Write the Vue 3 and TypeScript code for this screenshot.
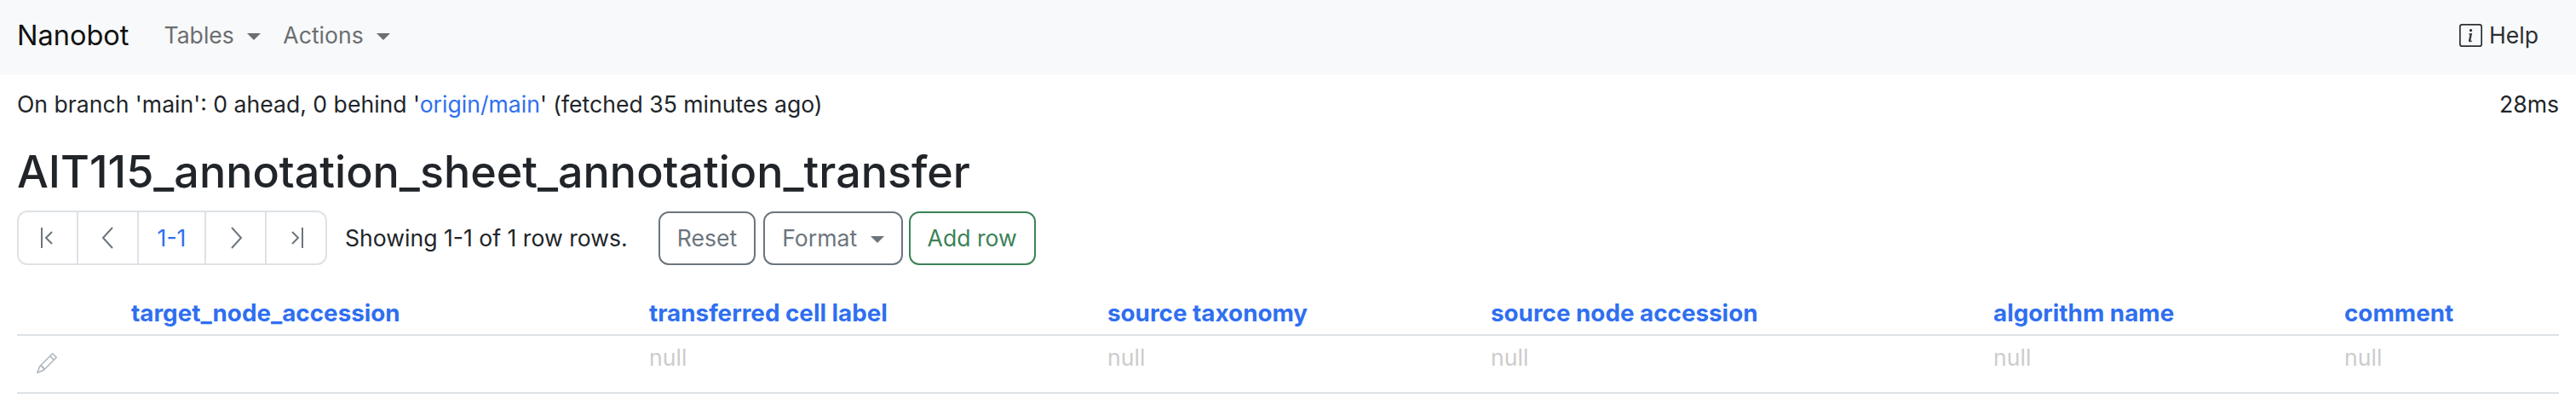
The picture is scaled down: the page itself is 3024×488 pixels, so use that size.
<script setup lang="ts">
const columns = [
  { name: 'target_node_accession', width: 608, value: '' },
  { name: 'transferred cell label', width: 538, value: 'null' },
  { name: 'source taxonomy', width: 450, value: 'null' },
  { name: 'source node accession', width: 590, value: 'null' },
  { name: 'algorithm name', width: 412, value: 'null' },
  { name: 'comment', width: 268, value: 'null' }
]
</script>

<template>
  <div class="page">
    <nav class="navbar">
      <span class="brand">Nanobot</span>
      <a class="nav-link">Tables <i class="caret"></i></a>
      <a class="nav-link">Actions <i class="caret"></i></a>
      <a class="help">
        <svg width="27" height="27" viewBox="0 0 16 16" fill="currentColor">
          <path d="M14 1a1 1 0 0 1 1 1v12a1 1 0 0 1-1 1H2a1 1 0 0 1-1-1V2a1 1 0 0 1 1-1h12zM2 0a2 2 0 0 0-2 2v12a2 2 0 0 0 2 2h12a2 2 0 0 0 2-2V2a2 2 0 0 0-2-2H2z" />
          <path d="m8.93 6.59-2.29.29-.08.38.45.08c.29.07.35.18.29.47l-.74 3.47c-.19.9.1 1.32.81 1.32.55 0 1.19-.25 1.48-.6l.09-.42c-.2.18-.5.25-.69.25-.28 0-.38-.2-.31-.54l.99-4.7zM9 4.5a1 1 0 1 1-2 0 1 1 0 0 1 2 0z" />
        </svg>
        Help
      </a>
    </nav>

    <main class="content">
      <div class="status">
        <span>On branch 'main': 0 ahead, 0 behind '<a class="link">origin/main</a>' (fetched 35 minutes ago)</span>
        <span>28ms</span>
      </div>

      <h1>AIT115_annotation_sheet_annotation_transfer</h1>

      <div class="toolbar">
        <div class="pagination">
          <span class="page-item first">
            <svg width="32" height="32" viewBox="0 0 32 32" fill="none" stroke="currentColor" stroke-width="2">
              <path d="M9 4v24" />
              <path d="M21 9l-7 7 7 7" />
            </svg>
          </span>
          <span class="page-item second">
            <svg width="32" height="32" viewBox="0 0 32 32" fill="none" stroke="currentColor" stroke-width="2">
              <path d="M21 4L10 16l11 12" />
            </svg>
          </span>
          <span class="page-item current">1-1</span>
          <span class="page-item second">
            <svg width="32" height="32" viewBox="0 0 32 32" fill="none" stroke="currentColor" stroke-width="2">
              <path d="M11 4l11 12-11 12" />
            </svg>
          </span>
          <span class="page-item last">
            <svg width="32" height="32" viewBox="0 0 32 32" fill="none" stroke="currentColor" stroke-width="2">
              <path d="M23 4v24" />
              <path d="M11 9l7 7-7 7" />
            </svg>
          </span>
        </div>
        <span class="showing">Showing 1-1 of 1 row rows.</span>
        <button class="btn reset">Reset</button>
        <button class="btn format">Format <i class="caret"></i></button>
        <button class="btn add">Add row</button>
      </div>

      <table>
        <colgroup>
          <col style="width: 118px" />
          <col v-for="col in columns" :key="col.name" :style="{ width: col.width + 'px' }" />
        </colgroup>
        <thead>
          <tr>
            <th></th>
            <th v-for="col in columns" :key="col.name">{{ col.name }}</th>
          </tr>
        </thead>
        <tbody>
          <tr>
            <td class="edit">
              <svg width="24" height="24" viewBox="0 0 16 16" fill="currentColor">
                <path d="M12.146.146a.5.5 0 0 1 .708 0l3 3a.5.5 0 0 1 0 .708l-10 10a.5.5 0 0 1-.168.11l-5 2a.5.5 0 0 1-.65-.65l2-5a.5.5 0 0 1 .11-.168l10-10zM11.207 2.5 13.5 4.793 14.793 3.5 12.5 1.207 11.207 2.5zm1.586 3L10.5 3.207 4 9.707V10h.5a.5.5 0 0 1 .5.5v.5h.5a.5.5 0 0 1 .5.5v.5h.293l6.5-6.5zm-9.761 5.175-.106.106-1.528 3.821 3.821-1.528.106-.106A.5.5 0 0 1 5 12.5V12h-.5a.5.5 0 0 1-.5-.5V11h-.5a.5.5 0 0 1-.468-.325z" />
              </svg>
            </td>
            <td v-for="col in columns" :key="col.name" class="null">{{ col.value }}</td>
          </tr>
        </tbody>
      </table>
    </main>
  </div>
</template>

<style>
body {
  background: #fff;
}
</style>

<style scoped>
.page {
  font-family: Inter, "Liberation Sans", sans-serif;
  font-size: 26.6px;
  color: #212529;
}

.navbar {
  display: flex;
  align-items: center;
  box-sizing: border-box;
  height: 88px;
  padding: 0 44px 6px 20px;
  background: #f8f9fa;
}

.brand {
  font-size: 32.5px;
  margin-right: 41px;
  color: #111;
}

.nav-link {
  color: #6c6e70;
  margin-right: 26px;
}

.caret {
  display: inline-block;
  margin-left: 8px;
  vertical-align: 4px;
  border-top: 8px solid currentColor;
  border-left: 8px solid transparent;
  border-right: 8px solid transparent;
}

.help {
  margin-left: auto;
  display: flex;
  align-items: center;
  gap: 8px;
  color: #2b2f33;
}

.content {
  padding: 0 20px;
}

.status {
  display: flex;
  justify-content: space-between;
  align-items: center;
  height: 68px;
}

.link {
  color: #2f6ff0;
}

h1 {
  font-size: 52px;
  font-weight: 500;
  line-height: 68px;
  margin: 12px 0 0;
}

.toolbar {
  display: flex;
  align-items: center;
  margin-top: 10px;
  height: 66px;
}

.pagination {
  display: flex;
  height: 64px;
  box-sizing: border-box;
  border: 2px solid #dee2e6;
  border-radius: 12px;
}

.page-item {
  display: flex;
  align-items: center;
  justify-content: center;
  box-sizing: border-box;
  color: #6c757d;
  border-right: 2px solid #dee2e6;
}

.first {
  width: 70px;
}

.second {
  width: 71px;
}

.current {
  width: 79px;
  color: #2f6ff0;
}

.last {
  width: 69px;
  border-right: none;
}

.showing {
  margin: 0 36px 0 21px;
}

.btn {
  font: inherit;
  box-sizing: border-box;
  height: 63px;
  padding: 0 20px;
  background: #fff;
  border: 2px solid #6c757d;
  border-radius: 12px;
  color: #6c757d;
  margin-right: 8px;
}

.reset {
  margin-right: 9px;
}

.format {
  margin-right: 7px;
}

.add {
  color: #3c8257;
  border-color: #3c8257;
}

table {
  width: 2984px;
  margin-top: 38px;
  border-collapse: collapse;
  table-layout: fixed;
}

th {
  box-sizing: border-box;
  height: 42px;
  padding: 0 16px 8px;
  line-height: 34px;
  text-align: left;
  font-size: 27.8px;
  font-weight: 700;
  color: #2f6ff0;
  border-bottom: 2px solid #dee2e6;
}

td {
  box-sizing: border-box;
  height: 68px;
  padding: 9px 16px 0;
  vertical-align: top;
  border-bottom: 2px solid #dee2e6;
}

.null {
  color: #ccc;
}

.edit {
  padding: 20px 0 0 23px;
  color: #adb5bd;
}

.edit svg {
  display: block;
}
</style>
